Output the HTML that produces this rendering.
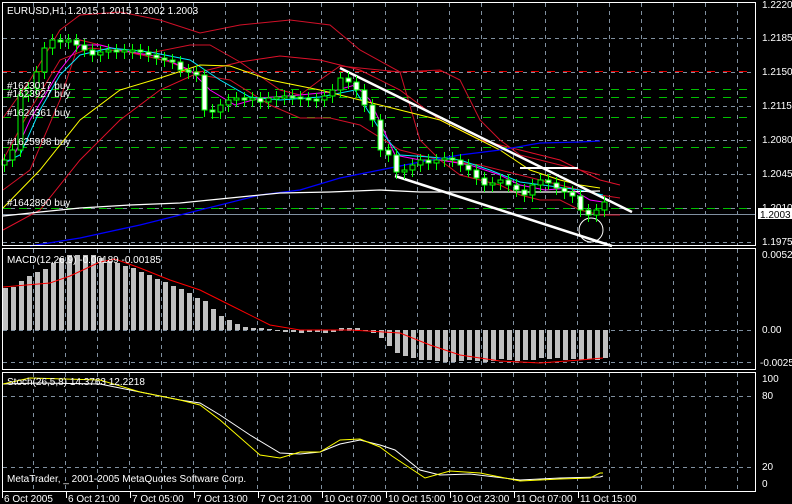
<!DOCTYPE html>
<html><head><meta charset="utf-8"><style>
html,body{margin:0;padding:0;background:#000;width:792px;height:504px;overflow:hidden}
svg{display:block}
text{font-family:"Liberation Sans",sans-serif;font-size:10px;fill:#fff}
</style></head><body>
<svg id="s" width="792" height="504" xmlns="http://www.w3.org/2000/svg">
<rect width="792" height="504" fill="#000"/>
<g id="grid" stroke="#8090a0" stroke-dasharray="4,4" stroke-width="1"></g>
<g id="g"></g>
<g fill="none" stroke="#fff" stroke-width="1">
<rect x="2.5" y="2.5" width="753" height="243"/>
<rect x="2.5" y="248.5" width="753" height="121"/>
<rect x="2.5" y="372.5" width="753" height="119"/>
</g>
<g id="txt">
<text x="7" y="14">EURUSD,H1  1.2015 1.2015 1.2002 1.2003</text>
<text x="7" y="89">#1623017 buy</text>
<text x="7" y="97">#1623927 buy</text>
<text x="7" y="116">#1624361 buy</text>
<text x="7" y="145">#1625998 buy</text>
<text x="7" y="206">#1642890 buy</text>
<text x="7" y="263">MACD(12,26,9) -0.00189 -0.00185</text>
<text x="7" y="385">Stoch(26,5,8) 14.3763 12.2218</text>
<text x="7" y="482">MetaTrader, _ 2001-2005 MetaQuotes Software Corp.</text>
<text x="762" y="8">1.2220</text>
<text x="762" y="41">1.2185</text>
<text x="762" y="75">1.2150</text>
<text x="762" y="109">1.2115</text>
<text x="762" y="143">1.2080</text>
<text x="762" y="177">1.2045</text>
<text x="762" y="211">1.2010</text>
<rect x="758" y="208" width="34" height="11" fill="#fff"/>
<text x="760" y="218" style="fill:#000">1.2003</text>
<text x="762" y="245">1.1975</text>
<text x="762" y="258">0.00523</text>
<text x="762" y="333">0.00</text>
<text x="760" y="366">-0.0025</text>
<text x="762" y="382">100</text>
<text x="762" y="399">80</text>
<text x="762" y="470">20</text>
<text x="762" y="487">0</text>
</g>
<g id="bot"></g>
</svg>
<script>
(function(){
var NS="http://www.w3.org/2000/svg";
function el(p,t,a){var e=document.createElementNS(NS,t);for(var k in a)e.setAttribute(k,a[k]);p.appendChild(e);return e;}
var grid=document.getElementById('grid'),g=document.getElementById('g'),bot=document.getElementById('bot');
for(var x=33;x<756;x+=32){el(grid,'line',{x1:x+.5,y1:3,x2:x+.5,y2:245});el(grid,'line',{x1:x+.5,y1:249,x2:x+.5,y2:369});el(grid,'line',{x1:x+.5,y1:373,x2:x+.5,y2:491});}
[38,72,106,140,174,208,242].forEach(function(y){el(grid,'line',{x1:3,y1:y+.5,x2:755,y2:y+.5});});
[330,362].forEach(function(y){el(grid,'line',{x1:3,y1:y+.5,x2:755,y2:y+.5});});
[396,467].forEach(function(y){el(grid,'line',{x1:3,y1:y+.5,x2:755,y2:y+.5});});
[89,97,117,147,208].forEach(function(y){el(g,'line',{x1:3,y1:y+.5,x2:755,y2:y+.5,stroke:'#00c000','stroke-dasharray':'8,8'});});
el(g,'line',{x1:3,y1:71.5,x2:755,y2:71.5,stroke:'#e00000','stroke-dasharray':'8,8'});
el(g,'line',{x1:3,y1:214.5,x2:755,y2:214.5,stroke:'#8090a0'});
function pl(pts,c,w){el(g,'polyline',{points:pts,fill:'none',stroke:c,'stroke-width':w||1});}
pl("3,230 40,210 80,160 120,120 160,90 200,72 240,62 280,56 320,60 360,70 400,90 440,120 480,140 520,150 560,160 600,180 620,185",'#e0102a');
pl("3,118 30,80 60,30 80,15 120,12 160,20 200,33 240,25 290,20 330,25 360,50 400,72 440,70 460,80 480,120 500,140 520,155 540,160 560,165 580,170 600,175","#d01028");
pl("3,190 30,170 60,100 80,40 140,55 190,45 210,45 240,62 280,90 300,95 320,80 340,66 400,72 420,140 440,160 460,175 480,180 500,185 520,195 540,200 560,200 580,210 600,215 620,215","#d01028");
pl("3,160 30,110 60,60 90,48 130,52 170,62 200,75 230,80 270,105 300,118 330,118 360,125 400,150 440,160 480,165 520,175 560,185 600,195 620,198","#d01028");
pl("3,163 12,160 30,120 60,70 80,45 100,45 120,50 160,57 190,70 210,90 235,105 260,98 300,95 330,92 355,85 370,100 395,155 420,160 440,160 470,165 500,175 520,185 545,190 570,188 590,200 603,202","#ff00ff");
pl("3,163 20,155 40,110 60,75 80,55 110,48 150,52 190,60 220,80 250,97 280,100 320,97 355,90 380,130 400,155 430,157 460,160 490,170 520,182 550,186 580,190 603,195","#00e8ff");
pl("3,208 40,170 80,120 120,90 160,78 200,65 230,66 270,80 320,90 360,100 400,110 440,120 470,135 500,150 530,170 560,180 580,185 600,188","#ffff00");
pl("30,246 80,238 140,225 200,210 260,195 300,190 340,178 380,170 420,162 460,155 500,150 540,143 580,142 600,141","#0000ff",1.3);
pl("3,216 40,212 80,208 130,205 180,203 230,198 280,193 330,192 380,190 420,192 480,192 560,192 600,191","#ffffff",1.3);
pl("340,68 632,212",'#fff',2.5);
pl("395,176 612,246",'#fff',2.5);
pl("520,168 578,168",'#fff',2);
el(g,'circle',{cx:591,cy:230,r:12,fill:'none',stroke:'#fff'});
var cl=[160,150,95,88,72,48,40,42,40,45,50,55,52,50,52,50,50,52,55,58,60,62,70,72,75,110,112,105,100,98,100,98,102,98,97,96,97,98,99,100,96,90,78,82,90,105,120,150,155,172,170,165,160,163,160,158,160,165,170,178,185,183,180,185,190,195,185,180,183,188,192,196,210,215,210,202];
var prev=165;
for(var i=0;i<cl.length;i++){var cx=4+8*i,c=cl[i],o=prev;var tp=Math.min(o,c),bt=Math.max(o,c);if(bt-tp<2){bt=tp+2;}
el(g,'line',{x1:cx+.5,y1:tp-6,x2:cx+.5,y2:bt+7,stroke:'#00ff00'});
el(g,'rect',{x:cx-2,y:tp,width:5,height:bt-tp,fill:c>o?'#fff':'#000',stroke:'#00ff00','stroke-width':1});
prev=c;}
var mt=[288,287,281,276,272,269,263,258,255,255,255,255,258,261,263,266,268,272,275,279,282,286,289,293,298,301,309,316,320,324,327,328,328,329,330,332,332,333,332,332,333,332,328,328,328,330,333,338,346,353,356,358,360,360,361,362,362,361,360,361,362,361,359,360,361,360,360,358,359,358,360,359,360,359,360,358];
for(var i=0;i<mt.length;i++){var bx=3+8*i,t=mt[i];el(g,'rect',{x:bx,y:Math.min(t,330),width:5,height:Math.max(1,Math.abs(t-330)),fill:'#c0c0c0'});}
pl("3,287 50,283 70,276 100,262 115,259 140,268 170,280 200,290 230,305 270,325 300,330 350,330 400,333 430,345 460,355 500,361 540,363 580,360 603,358",'#ff0000');
pl("3,384 40,383 100,384 140,392 180,400 200,403 220,415 250,435 280,453 300,454 320,452 340,444 360,440 380,445 395,450 420,470 440,475 470,474 520,480 560,478 600,477 603,476",'#ffffff');
pl("3,384 30,378 100,380 140,392 180,400 200,405 220,420 260,455 280,458 300,452 320,452 340,440 360,439 380,447 392,456 410,468 425,478 450,471 480,473 520,481 560,479 590,478 600,473 603,473",'#ffff00');
var L=["6 Oct 2005","6 Oct 21:00","7 Oct 05:00","7 Oct 13:00","7 Oct 21:00","10 Oct 07:00","10 Oct 15:00","10 Oct 23:00","11 Oct 07:00","11 Oct 15:00"];
for(var i=0;i<L.length;i++){var lx=2+64*i;el(bot,'line',{x1:lx+.5,y1:492,x2:lx+.5,y2:498,stroke:'#fff'});var te=el(bot,'text',{x:lx+2,y:502});te.textContent=L[i];}
})();
</script>
</body></html>
